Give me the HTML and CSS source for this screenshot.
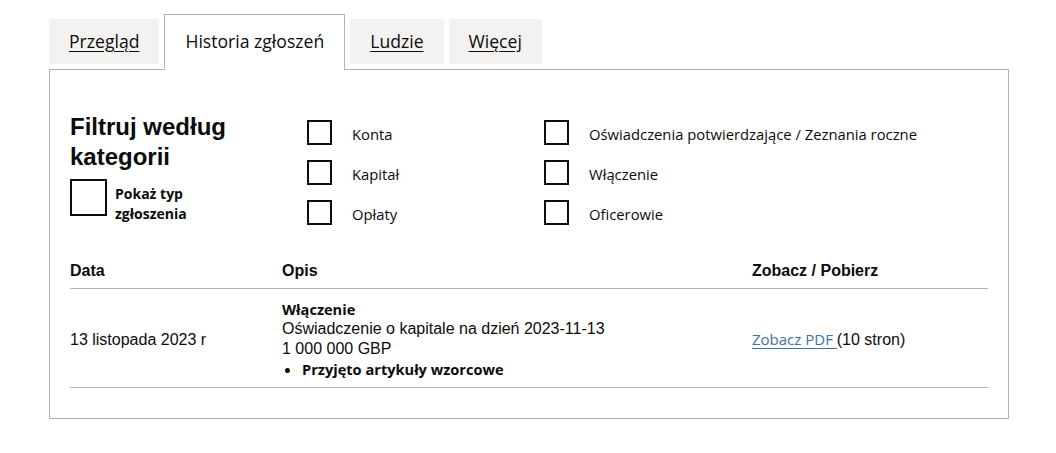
FILE: index.html
```html
<!DOCTYPE html>
<html lang="pl">
<head>
    <meta charset="UTF-8">
    <meta name="viewport" content="width=device-width, initial-scale=1.0">
    <title>Historia zgłoszeń</title>
    <link rel="stylesheet" href="styles.css">
</head>
<body>
    <div class="page">
        <ul class="tabs">
            <li class="tab"><a href="#">Przegląd</a></li>
            <li class="tab tab-selected"><span>Historia zgłoszeń</span></li>
            <li class="tab"><a href="#">Ludzie</a></li>
            <li class="tab"><a href="#">Więcej</a></li>
        </ul>

        <div class="panel">
            <div class="filters">
                <div class="filter-head">
                    <h2>Filtruj według kategorii</h2>
                    <label class="toggle">
                        <span class="box box-large"></span>
                        <span class="toggle-text">Pokaż typ zgłoszenia</span>
                    </label>
                </div>
                <div class="filter-col">
                    <label class="check"><span class="box"></span><span class="check-text">Konta</span></label>
                    <label class="check"><span class="box"></span><span class="check-text">Kapitał</span></label>
                    <label class="check"><span class="box"></span><span class="check-text">Opłaty</span></label>
                </div>
                <div class="filter-col">
                    <label class="check"><span class="box"></span><span class="check-text">Oświadczenia potwierdzające / Zeznania roczne</span></label>
                    <label class="check"><span class="box"></span><span class="check-text">Włączenie</span></label>
                    <label class="check"><span class="box"></span><span class="check-text">Oficerowie</span></label>
                </div>
            </div>

            <table class="filings">
                <thead>
                    <tr>
                        <th class="col-date">Data</th>
                        <th class="col-desc">Opis</th>
                        <th class="col-view">Zobacz / Pobierz</th>
                    </tr>
                </thead>
                <tbody>
                    <tr>
                        <td>13 listopada 2023 r</td>
                        <td>
                            <strong class="desc-type">Włączenie</strong>
                            <div>Oświadczenie o kapitale na dzień 2023-11-13</div>
                            <div>1 000 000 GBP</div>
                            <ul class="desc-list">
                                <li>Przyjęto artykuły wzorcowe</li>
                            </ul>
                        </td>
                        <td><a class="pdf-link" href="#">Zobacz PDF </a>(10 stron)</td>
                    </tr>
                </tbody>
            </table>
        </div>
    </div>
</body>
</html>
```

FILE: styles.css
```css
body {
    margin: 0;
    background: #fff;
    color: #0b0c0c;
    font-family: 'Liberation Sans', Arial, sans-serif;
}

.page {
    width: 960px;
    padding: 14px 0 0 49px;
}

/* tabs */

.tabs {
    display: flex;
    align-items: flex-start;
    margin: 0;
    padding: 0;
    list-style: none;
}

.tab {
    margin: 5px 5px 0 0;
    padding: 10px 20px;
    background: #f3f2f1;
    font-family: 'Open Sans', sans-serif;
    font-size: 17.6px;
    line-height: 25px;
}

.tab a {
    color: #0b0c0c;
    text-decoration: underline;
    text-underline-offset: 3px;
}

.tab-selected {
    position: relative;
    margin-top: 0;
    margin-bottom: -1px;
    padding: 14px 20px 16px;
    background: #fff;
    border: 1px solid #b1b4b6;
    border-bottom: 0;
}

/* panel */

.panel {
    border: 1px solid #b1b4b6;
    padding: 42px 20px 30px;
}

.filters {
    display: grid;
    grid-template-columns: 237px 237px 1fr;
}

.filter-head h2 {
    margin: 0 0 7px;
    font-size: 24px;
    line-height: 30px;
    font-weight: bold;
}

.toggle {
    display: flex;
    align-items: flex-start;
    gap: 8px;
}

.toggle-text {
    width: 100px;
    padding-top: 5px;
    font-family: 'Open Sans', sans-serif;
    font-size: 14px;
    font-weight: bold;
    line-height: 20px;
}

.filter-col {
    display: flex;
    flex-direction: column;
    gap: 15px;
    padding-top: 8px;
}

.check {
    display: flex;
    align-items: center;
    gap: 20px;
    height: 25px;
    font-family: 'Open Sans', sans-serif;
    font-size: 14.8px;
}

.check-text {
    padding-top: 3px;
}

.box {
    box-sizing: border-box;
    flex: none;
    width: 25px;
    height: 25px;
    border: 2px solid #0b0c0c;
    background: #fff;
}

.box-large {
    width: 37px;
    height: 37px;
}

/* table */

.filings {
    width: 100%;
    margin-top: 27px;
    border-collapse: collapse;
    font-size: 16px;
}

.filings th,
.filings td {
    padding: 10px 0 7px;
    border-bottom: 1px solid #b1b4b6;
    text-align: left;
    vertical-align: middle;
    line-height: 20px;
}

.filings th {
    padding: 9px 0 7px;
}

.col-date {
    width: 212px;
}

.col-desc {
    width: 470px;
}

.desc-type,
.desc-list {
    font-family: 'Open Sans', sans-serif;
    font-weight: bold;
    font-size: 14.6px;
}

.desc-type {
    display: block;
}

.desc-list {
    margin: 0;
    padding-left: 20px;
    line-height: 21px;
}

.pdf-link {
    color: #3a73a8;
    font-family: 'Open Sans', sans-serif;
    font-size: 15px;
    text-decoration: underline;
    text-underline-offset: 3px;
}
```
